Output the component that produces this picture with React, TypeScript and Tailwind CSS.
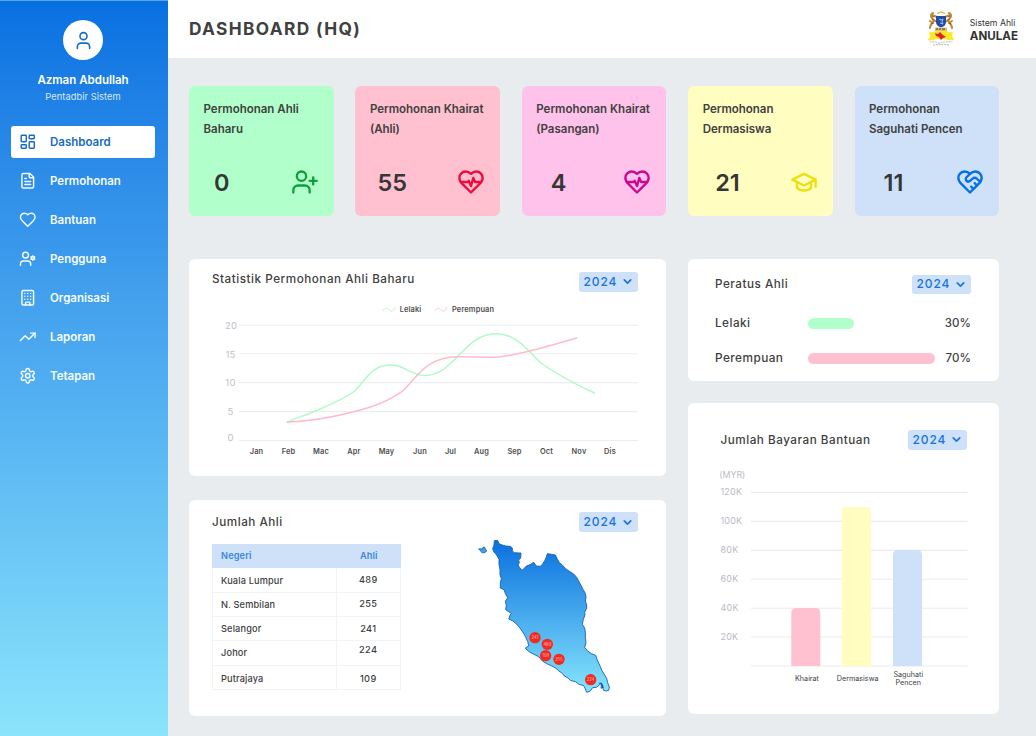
import type { ReactNode } from "react";
import { Building, ChevronDown, FileText, LayoutDashboard, TrendingUp, User, UserPlus } from "lucide-react";

function Glyph({ size, color = "currentColor", children }: { size: number; color?: string; children: ReactNode }) {
  return (
    <svg width={size} height={size} viewBox="0 0 24 24" fill="none" stroke={color} strokeWidth="2" strokeLinecap="round" strokeLinejoin="round">
      {children}
    </svg>
  );
}

const heartPath =
  "M19 14c1.49-1.46 3-3.21 3-5.5A5.5 5.5 0 0 0 16.5 3c-1.76 0-3 .5-4.5 2-1.5-1.500-2.740-2-4.500-2A5.5 5.5 0 0 0 2 8.500c0 2.300 1.500 4.050 3 5.500l7 7Z";

function HeartIcon() {
  return (
    <Glyph size={17.5}>
      <path d={heartPath} />
    </Glyph>
  );
}

function PulseHeart({ color }: { color: string }) {
  return (
    <Glyph size={28} color={color}>
      <path d={heartPath} />
      <path d="M3.22 12H9.5l.5-1 2 4.5 2-7 1.5 3.5h5.27" />
    </Glyph>
  );
}

function HandshakeHeart() {
  return (
    <Glyph size={28} color="#056fe3">
      <path d={heartPath} />
      <path d="M12 5 9.04 7.96a2.17 2.17 0 0 0 0 3.08c.82.82 2.13.85 3 .07l2.07-1.9a2.82 2.82 0 0 1 3.79 0l2.96 2.66M18 15l-2-2M15 18l-2-2" />
    </Glyph>
  );
}

function UserGear() {
  return (
    <Glyph size={17.5}>
      <path d="M2 21v-2a4 4 0 0 1 4-4h6a4 4 0 0 1 4 4v2" />
      <circle cx="9" cy="7" r="4" />
      <circle cx="19" cy="11" r="2" />
      <path d="M19 8v1M19 13v1M21.6 9.5l-.87.5M17.27 12l-.87.5M21.6 12.5l-.87-.5M17.27 10l-.87-.5" />
    </Glyph>
  );
}

function Gear() {
  return (
    <Glyph size={17.5}>
      <path d="M12.22 2h-.44a2 2 0 0 0-2 2v.18a2 2 0 0 1-1 1.73l-.43.25a2 2 0 0 1-2 0l-.15-.08a2 2 0 0 0-2.73.73l-.22.38a2 2 0 0 0 .73 2.73l.15.1a2 2 0 0 1 1 1.72v.51a2 2 0 0 1-1 1.74l-.15.09a2 2 0 0 0-.73 2.73l.22.38a2 2 0 0 0 2.73.73l.15-.08a2 2 0 0 1 2 0l.43.25a2 2 0 0 1 1 1.73V20a2 2 0 0 0 2 2h.44a2 2 0 0 0 2-2v-.18a2 2 0 0 1 1-1.73l.43-.25a2 2 0 0 1 2 0l.15.08a2 2 0 0 0 2.73-.73l.22-.39a2 2 0 0 0-.73-2.73l-.15-.08a2 2 0 0 1-1-1.74v-.5a2 2 0 0 1 1-1.74l.15-.09a2 2 0 0 0 .73-2.73l-.22-.38a2 2 0 0 0-2.73-.73l-.15.08a2 2 0 0 1-2 0l-.43-.25a2 2 0 0 1-1-1.73V4a2 2 0 0 0-2-2z" />
      <circle cx="12" cy="12" r="3" />
    </Glyph>
  );
}

function Cap() {
  return (
    <Glyph size={28} color="#ebe010">
      <path d="M22 10v6M2 10l10-5 10 5-10 5z" />
      <path d="M6 12v5c3 3 9 3 12 0v-5" />
    </Glyph>
  );
}

function Crest() {
  return (
    <svg width="28" height="36" viewBox="0 0 28 36" fill="none">
      <path d="M6 2c-2 1-3 3-1 5l2 3c-2 2-4 4-4 7M5 4l5 2M7 9l3 2M3 10l3 2M22 2c2 1 3 3 1 5l-2 3c2 2 4 4 4 7M23 4l-5 2M21 9l-3 2M25 10l-3 2" stroke="#c08a38" strokeWidth="2.100" strokeLinecap="round" />
      <path d="M5 5l2 1M5 8l2 1M6 12l-2 1M23 5l-2 1M23 8l-2 1M22 12l2 1" stroke="#6b4a28" strokeWidth=".8" />
      <path d="M10 2.500l4-1.500 4 1.500" stroke="#e0ad3a" strokeWidth="1.300" />
      <path d="M9 5h10v6q0 4-5 5.500-5-1.500-5-5.500z" fill="#224ca8" />
      <path d="M12 8l2 1 2-1-1 3 1 2-3-1" stroke="#a7c1ee" strokeWidth="1" />
      <path d="M8 16.500h12v4H8z" fill="#d6bd7c" />
      <path d="M9 18h2m1 0h2m1 0h3" stroke="#7b6747" strokeWidth="1.300" />
      <path d="M2 21q4 1 6-1h12q2 2 6 1l-1 4 2 4q-6 1-8-1H9q-3 2-8 1l2-4z" fill="#f9e92c" />
      <path d="M8 22l3 1 2-2 3 3 3 2-3 1-2 2-2-3-3-1z" fill="#e3221b" />
      <path d="M2.500 31q5-1 9.500 1.500 7-2.500 13.500-1.500M6 34q8-1 16 0" stroke="#c3c6cb" strokeWidth="1.200" strokeDasharray="2 .8" />
    </svg>
  );
}

const nav: { label: string; icon: ReactNode }[] = [
  { label: "Dashboard", icon: <LayoutDashboard size={17.5} /> },
  { label: "Permohonan", icon: <FileText size={17.5} /> },
  { label: "Bantuan", icon: <HeartIcon /> },
  { label: "Pengguna", icon: <UserGear /> },
  { label: "Organisasi", icon: <Building size={17.5} /> },
  { label: "Laporan", icon: <TrendingUp size={17.5} /> },
  { label: "Tetapan", icon: <Gear /> },
];

const stats: { a: string; b: string; value: string; color: string; indent: string; icon: ReactNode }[] = [
  { a: "Permohonan Ahli", b: "Baharu", value: "0", color: "bg-[#b1ffca]", indent: "pl-[25px]", icon: <UserPlus size={28} color="#0d9f3c" /> },
  { a: "Permohonan Khairat", b: "(Ahli)", value: "55", color: "bg-[#ffc1cf]", indent: "pl-[22px]", icon: <PulseHeart color="#f00a3d" /> },
  { a: "Permohonan Khairat", b: "(Pasangan)", value: "4", color: "bg-[#ffc2ea]", indent: "pl-[29px]", icon: <PulseHeart color="#cb0791" /> },
  { a: "Permohonan", b: "Dermasiswa", value: "21", color: "bg-[#fffdbf]", indent: "pl-[27px]", icon: <Cap /> },
  { a: "Permohonan", b: "Saguhati Pencen", value: "11", color: "bg-[#cee1f9]", indent: "pl-[29px]", icon: <HandshakeHeart /> },
];

function YearSelect() {
  return (
    <button className="flex h-[19.500px] w-[59.500px] shrink-0 items-center justify-between rounded-[3px] bg-[#cee1f9] pr-[4px] pl-[5px] text-[12px] leading-4 font-medium tracking-[0.9px] text-[#1673e0]">
      2024
      <ChevronDown size={13} strokeWidth={3} />
    </button>
  );
}

function Title({ children }: { children: ReactNode }) {
  return <h2 className="text-[11.700px] leading-4 font-medium tracking-[0.520px] text-[#404040]">{children}</h2>;
}

const months: [string, number][] = [
  ["Jan", 256.5], ["Feb", 288.5], ["Mac", 321], ["Apr", 354], ["May", 386.5], ["Jun", 420],
  ["Jul", 450.5], ["Aug", 481.5], ["Sep", 514.5], ["Oct", 546.5], ["Nov", 579], ["Dis", 610],
];

function LineChart() {
  return (
    <svg className="mt-2 block" width="430" height="160" viewBox="212 300 430 160" fill="none">
      {[325.2, 353.8, 382.6, 411.6, 440.5].map((y) => (
        <path key={y} d={`M239 ${y}H638`} stroke="#ebedee" strokeWidth="1.100" />
      ))}
      <g className="text-[9.500px] tracking-[0.2px]" fill="#bcbfca" textAnchor="middle">
        <text x="231.200" y="329">20</text>
        <text x="230.500" y="358">15</text>
        <text x="230.500" y="386.200">10</text>
        <text x="230.500" y="415">5</text>
        <text x="230.500" y="441.200">0</text>
      </g>
      <path d="M286.700 422.300C299 417 309 414 321.700 408.200C334 402.500 344 399 354 391.500C365 382 370 365 390.700 365C406 365 410 375.500 425 375.500C455 375.500 463 333.700 496 333.700C520 333.700 532 357 543 364.500C560 376 578 385.500 595 393.300" stroke="#b1fac6" strokeWidth="1.500" />
      <path d="M286.700 422.300C309 421 330 418 351.700 412.300C370 408 388 402 401.700 391.700C416 380 424 357 458 356.700C474 356.700 484 357.500 495 357.200C512 356.500 548 346.500 577.300 337.700" stroke="#fcbccb" strokeWidth="1.500" />
      <path d="M383 311c2-4 4-3 6-1s4 2 6-3" stroke="#bff8cf" />
      <path d="M435 311c2-4 4-3 6-1s4 2 6-3" stroke="#fdcdd8" />
      <g className="text-[7.400px] font-semibold tracking-[0.15px]" fill="#505050">
        <text x="399.700" y="312">Lelaki</text>
        <text x="452" y="312">Perempuan</text>
        <g textAnchor="middle">
          {months.map(([m, x]) => (
            <text key={m} x={x} y="454.200">{m}</text>
          ))}
        </g>
      </g>
    </svg>
  );
}

const scale: [string, number][] = [
  ["120K", 492.4], ["100K", 521.4], ["80K", 550.4], ["60K", 579.3], ["40K", 608.3], ["20K", 637],
];

function BarChart() {
  return (
    <svg className="mt-4 block" width="255" height="225" viewBox="715 466 255 225" fill="none">
      <g className="text-[9px] tracking-[0.2px]" fill="#b8bbc7">
        <text x="719.300" y="478" className="text-[8.800px] tracking-normal">(MYR)</text>
        {scale.map(([label, y]) => (
          <g key={label}>
            <path d={`M751 ${y}H967.500`} stroke="#e9ebec" strokeWidth="1.100" />
            <text x="720.500" y={y + 3}>{label}</text>
          </g>
        ))}
      </g>
      <path d="M751 666H967.500" stroke="#e9ebec" />
      <path d="M791.300 666V613q0-5 5-5h19q5 0 5 5v53z" fill="#ffc1cf" />
      <path d="M841.800 666V512q0-5 5-5h19.500q5 0 5 5v154z" fill="#fffdbf" />
      <path d="M893 666V555q0-5 5-5h19q5 0 5 5v111z" fill="#cee1f9" />
      <g className="text-[7.200px]" fill="#404040" textAnchor="middle">
        <text x="807" y="681">Khairat</text>
        <text x="857.700" y="681">Dermasiswa</text>
        <text x="908.300" y="676.500">Saguhati</text>
        <text x="908.300" y="685">Pencen</text>
      </g>
    </svg>
  );
}

const pins: [string, number, number][] = [
  ["241", 225, 413], ["489", 262, 433], ["109", 257, 467], ["255", 297, 478], ["224", 392, 539],
];

const coast =
  "103,122 113,121 117,131 127,135 137,138 151,139 157,144 157,153 163,158 178,159 183,159 182,174 176,180 178,188 174,195 179,203 186,211 193,205 198,199 212,193 221,187 229,198 241,199 248,192 254,182 259,171 262,161 275,163 286,165 291,175 297,187 306,194 317,206 330,215 341,222 350,232 357,245 363,256 369,268 376,280 378,291 376,303 380,315 380,325 374,337 375,345 370,358 367,373 374,384 376,397 376,412 378,428 374,442 382,452 394,461 407,466 411,478 416,489 421,500 426,512 434,525 440,535 443,548 448,561 446,571 438,573 431,571 428,562 423,565 424,553 420,548 417,556 409,562 398,563 391,573 380,577 375,564 371,557 357,553 346,545 331,541 324,534 312,527 307,520 297,513 288,505 276,498 260,491 247,483 237,471 228,466 210,457 200,449 196,444 206,438 203,424 197,412 194,405 186,393 180,384 174,377 165,368 157,362 146,357 150,346 154,340 146,335 137,329 139,316 136,304 143,293 136,281 133,270 121,264 121,248 124,236 120,224 120,209 117,192 117,178 109,164 101,155 98,146 102,135";

function PeninsulaMap() {
  return (
    <svg className="block shrink-0" width="140" height="160" viewBox="48 108 420 480">
      <defs>
        <linearGradient id="land" x1="0" y1="0" x2="0" y2="1">
          <stop offset="0" stopColor="#0970df" />
          <stop offset="1" stopColor="#86e5fb" />
        </linearGradient>
      </defs>
      <g stroke="#1c62b8" strokeWidth="2.800" strokeLinejoin="round">
        <path d="M56 147l6-1 5 2 2-6 6 1 1 5 5 4-6 5-8 2-4-5z" fill="#3fa6e0" />
        <polygon points={coast} fill="url(#land)" />
      </g>
      <path d="M422 549l5 8 2 7" stroke="#174e9d" strokeWidth="5" fill="none" />
      {pins.map(([n, x, y]) => (
        <g key={n}>
          <circle cx={x} cy={y} r="17" fill="#f5291d" />
          <text x={x} y={y + 4.5} textAnchor="middle" className="text-[12.500px]" fill="#ffc3bd">{n}</text>
        </g>
      ))}
    </svg>
  );
}

const rows: { name: string; count: string; size: string; shift: string; nameShift: string }[] = [
  { name: "Kuala Lumpur", count: "489", size: "h-[25px]", shift: "pt-px", nameShift: "pt-[2px]" },
  { name: "N. Sembilan", count: "255", size: "h-[24px]", shift: "", nameShift: "pt-[2px]" },
  { name: "Selangor", count: "241", size: "h-[24px]", shift: "pt-px", nameShift: "pt-[2px]" },
  { name: "Johor", count: "224", size: "h-[25px]", shift: "pb-[5px]", nameShift: "" },
  { name: "Putrajaya", count: "109", size: "h-[24px]", shift: "pt-[3px]", nameShift: "pt-[3px]" },
];

export default function App() {
  return (
    <div className="flex h-[736px] w-[1036px] overflow-hidden bg-[#e8ecef] font-['Inter',sans-serif] text-[#404040]">
      <aside className="flex w-[167.500px] shrink-0 flex-col items-center border-t border-[#5ea4eb] bg-linear-to-b from-[#0670e1] to-[#8be4fb] bg-origin-border pr-[1.500px] text-white">
        <div className="mt-[19px] flex size-10 items-center justify-center rounded-full bg-white text-[#176ac7]">
          <User size={21} strokeWidth={1.8} />
        </div>
        <p className="mt-[12px] text-[11.500px] leading-4 font-semibold">Azman Abdullah</p>
        <p className="mt-px text-[9.300px] leading-4 tracking-[0.05px] text-[#d7eafc]">Pentadbir Sistem</p>
        <nav className="mt-[20.500px] flex w-[144px] flex-col gap-[7px]">
          {nav.map((item, i) => (
            <a
              key={item.label}
              className={`flex h-8 items-center rounded-[3px] pl-[7.500px] text-[11.500px] font-semibold ${i === 0 ? "bg-white text-[#176ac7]" : "text-[#f5fbff]"}`}
            >
              {item.icon}
              <span className="ml-[14px] pt-[2px]">{item.label}</span>
            </a>
          ))}
        </nav>
      </aside>
      <main className="min-w-0 flex-1">
        <header className="flex h-[58px] items-center justify-between bg-white pr-[18px] pl-[21.500px]">
          <h1 className="text-[17.300px] font-bold tracking-[1.350px] text-[#404040]">DASHBOARD (HQ)</h1>
          <div className="flex items-center gap-[15px]">
            <Crest />
            <div className="pt-[2px] text-[#333]">
              <p className="text-[8.700px] leading-[12px]">Sistem Ahli</p>
              <p className="text-[11.600px] leading-[14px] font-bold">ANULAE</p>
            </div>
          </div>
        </header>
        <div className="pt-[28px] pr-[37px] pl-[21.500px]">
          <section className="flex justify-between">
            {stats.map((s) => (
              <article key={s.value} className={`flex h-[129.500px] w-[144.500px] flex-col justify-between rounded-[6px] pt-[13px] ${s.color}`}>
                <h2 className="pl-[14.500px] text-[11.500px] leading-[20px] font-semibold whitespace-nowrap">
                  {s.a}
                  <br />
                  {s.b}
                </h2>
                <div className={`mb-[17px] flex items-center justify-between pr-[15px] ${s.indent}`}>
                  <span className="pt-px text-[23.500px] leading-8 font-semibold text-[#363636]">{s.value}</span>
                  {s.icon}
                </div>
              </article>
            ))}
          </section>
          <div className="mt-[43.500px] flex justify-between">
            <div className="flex w-[477px] flex-col gap-6">
              <section className="h-[216.500px] rounded-[6px] bg-white pt-[13px] pr-[28px] pl-[23px]">
                <div className="flex h-[20px] items-start justify-between">
                  <div className="-mt-px"><Title>Statistik Permohonan Ahli Baharu</Title></div>
                  <YearSelect />
                </div>
                <LineChart />
              </section>
              <section className="h-[216.500px] rounded-[6px] bg-white pt-[12.500px] pr-[28px] pl-[23px]">
                <div className="flex h-[20px] items-center justify-between">
                  <Title>Jumlah Ahli</Title>
                  <YearSelect />
                </div>
                <div className="flex justify-between pr-[22px]">
                  <table className="mt-[11.500px] h-fit w-[189px] table-fixed border-separate border-spacing-0 text-[9.200px] font-medium tracking-[0.15px]">
                    <thead>
                      <tr className="h-[24px] bg-[#cee1f9] text-[#3986df]">
                        <th className="w-[124.500px] p-0 pt-px pl-[9px] text-left font-semibold">Negeri</th>
                        <th className="p-0 pt-px font-semibold">Ahli</th>
                      </tr>
                    </thead>
                    <tbody>
                      {rows.map((r) => (
                        <tr key={r.name} className={r.size}>
                          <td className={`border-x border-b border-[#f2f3f7] p-0 pl-[8px] ${r.nameShift}`}>{r.name}</td>
                          <td className={`border-r border-b border-[#f2f3f7] p-0 text-center tracking-[0.350px] ${r.shift}`}>{r.count}</td>
                        </tr>
                      ))}
                    </tbody>
                  </table>
                  <div className="mt-[3.500px]"><PeninsulaMap /></div>
                </div>
              </section>
            </div>
            <div className="flex w-[311px] flex-col gap-[22px]">
              <section className="h-[122px] rounded-[6px] bg-white pt-[15.500px] pr-[28px] pl-[27px]">
                <div className="flex items-center justify-between">
                  <div><Title>Peratus Ahli</Title></div>
                  <YearSelect />
                </div>
                <div className="mt-[21px] flex h-4 items-center text-[11.800px] font-medium tracking-[0.450px]">
                  <span className="w-[93px] pt-px">Lelaki</span>
                  <span className="h-[11px] w-[46px] rounded-full bg-[#b1ffca]" />
                  <span className="ml-auto pt-px text-[11.500px] tracking-[0.05px]">30%</span>
                </div>
                <div className="mt-[19px] flex h-4 items-center text-[11.800px] font-medium tracking-[0.450px]">
                  <span className="w-[93px] pt-px">Perempuan</span>
                  <span className="h-[11px] w-[127px] rounded-full bg-[#ffc1cf]" />
                  <span className="ml-auto pt-px text-[11.500px] tracking-[0.05px]">70%</span>
                </div>
              </section>
              <section className="h-[311px] rounded-[6px] bg-white pt-[27px] pl-[27px]">
                <div className="flex items-center justify-between pr-[32px] pl-[5.500px]">
                  <Title>Jumlah Bayaran Bantuan</Title>
                  <YearSelect />
                </div>
                <BarChart />
              </section>
            </div>
          </div>
        </div>
      </main>
    </div>
  );
}
